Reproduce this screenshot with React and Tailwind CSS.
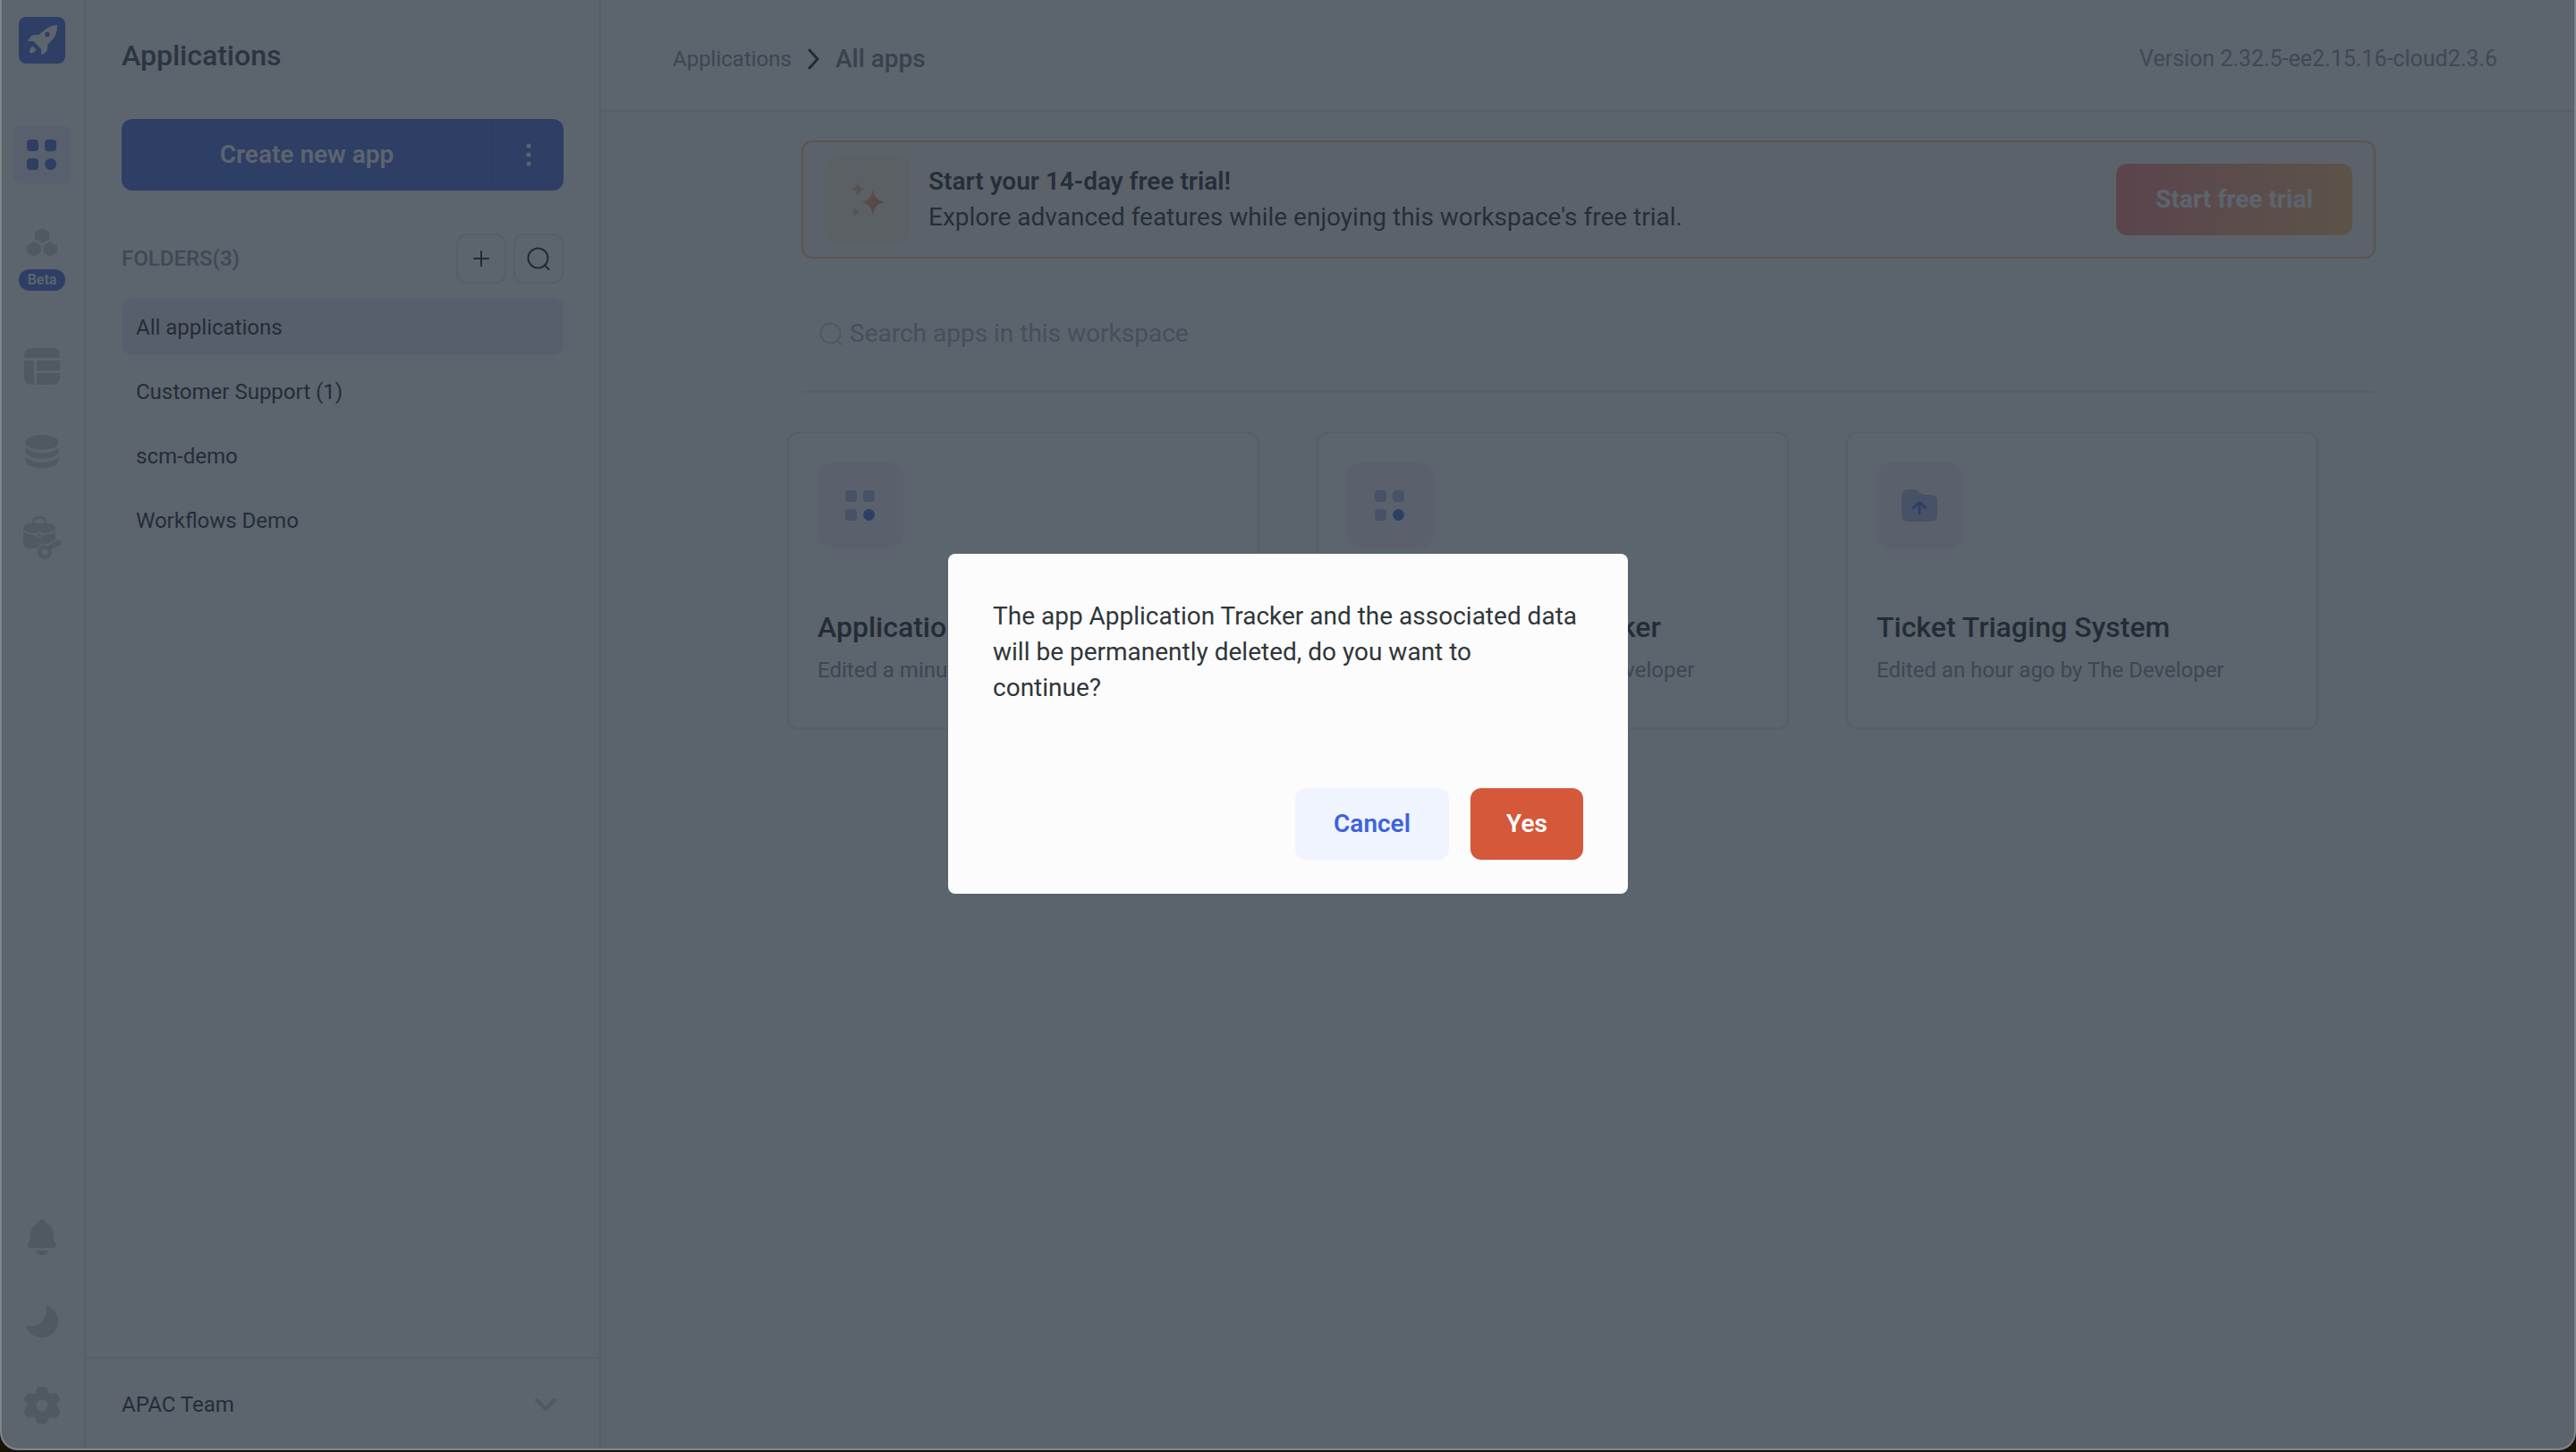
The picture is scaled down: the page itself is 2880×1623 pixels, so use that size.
import React from "react";

function RocketLogo() {
  return (
    <svg viewBox="0 0 52 52" className="size-13" aria-hidden="true">
      <rect width="52" height="52" rx="8" fill="#3e63dd" />
      <path
        fill="#fcfcfc"
        fillRule="evenodd"
        d="M43 9C37 9.2 33 11 29.500 14L22 20H17.500C14 20.200 12.500 22.500 10 27H16.500L25 36V42C28.500 41.500 31.500 39 32 36L32.500 30.500L37.500 25.500C41.500 21 43 16 43 9ZM32 22.200A2.700 2.700 0 1 1 32 16.800A2.700 2.700 0 1 1 32 22.200Z"
      />
      <path fill="#fcfcfc" d="M15.500 32.500L19.500 36.500C18.500 39 16 40.500 12 40.500C12 37 13 34 15.500 32.500Z" />
    </svg>
  );
}

function DotsIcon({ tinted }) {
  const soft = tinted ? "#acb5e2" : "#3e63dd";
  return (
    <svg viewBox="0 0 34 36" className="h-9 w-[34px]" aria-hidden="true">
      <rect x="0" y="1" width="13" height="13" rx="4" fill={soft} />
      <rect x="20" y="1" width="13" height="13" rx="4" fill={soft} />
      <rect x="0" y="22" width="13" height="13" rx="4" fill={soft} />
      <circle cx="26.500" cy="28.500" r="6.500" fill="#3e63dd" />
    </svg>
  );
}

function HexagonsIcon() {
  return (
    <svg viewBox="0 0 34 32" className="h-8 w-[34px]" fill="currentColor" aria-hidden="true">
      <path d="M17 0L25 4.500V12.500L17 16.500L9 12.500V4.500Z" />
      <path d="M8 15L15.500 19.500V27.500L8 31.500L0 27.500V19.500Z" />
      <path d="M26 15L34 19.500V27.500L26 31.500L18.500 27.500V19.500Z" />
    </svg>
  );
}

function TableIcon() {
  return (
    <svg viewBox="0 0 40 41" className="h-[41px] w-10" fill="currentColor" aria-hidden="true">
      <path d="M9 0H31Q40 0 40 9V11H0V9Q0 0 9 0Z" />
      <path d="M0 14H11V41H9Q0 41 0 32Z" />
      <path d="M14 14H40V25H14Z" />
      <path d="M14 28H40V32Q40 41 31 41H14Z" />
    </svg>
  );
}

function DatabaseIcon() {
  return (
    <svg viewBox="0 0 38 38" className="size-[38px]" fill="currentColor" aria-hidden="true">
      <ellipse cx="19" cy="8.500" rx="18.500" ry="8.500" />
      <path d="M.500 14Q7 20.500 19 20.500T37.500 14V18C37.500 29.500 .500 29.500 .500 18Z" />
      <path d="M.500 24.500Q7 31 19 31T37.500 24.500V28C37.500 40.500 .500 40.500 .500 28Z" />
    </svg>
  );
}

function BriefcaseKeyIcon() {
  return (
    <svg viewBox="0 0 43 48" className="h-12 w-[43px]" aria-hidden="true">
      <path d="M11.500 9V7.500Q11.500 1.500 17 1.500H19Q25 1.500 25 7.500V9" fill="none" stroke="currentColor" strokeWidth="3" />
      <path d="M8 8H28Q36 8 36 16V28Q36 36 28 36H8Q0 36 0 28V16Q0 8 8 8Z" fill="currentColor" />
      <path d="M0 16Q7 20.500 18 20.500T36 16" fill="none" stroke="#fcfcfc" strokeWidth="2" />
      <ellipse cx="18" cy="21" rx="2.500" ry="3.200" fill="currentColor" stroke="#fcfcfc" strokeWidth="1.500" />
      <g stroke="#fcfcfc" strokeWidth="3.500" fill="#fcfcfc">
        <circle cx="24" cy="40" r="8" />
        <path d="M26 34L37 27H42V32L32 40Z" />
      </g>
      <path d="M27 34L35.500 27.800Q37 26.800 42 27V31.500L38 34L36.500 33.500L30 39Z" fill="currentColor" />
      <circle cx="24" cy="40" r="5.800" fill="#fcfcfc" stroke="currentColor" strokeWidth="4.500" />
    </svg>
  );
}

function BellIcon() {
  return (
    <svg viewBox="0 0 34 40" className="h-10 w-[34px]" fill="currentColor" aria-hidden="true">
      <path d="M17 0C19.500 0 21.200 1.700 21.400 4.300C27 6.500 29.500 11 29.800 17C30 22 30.500 24 32.300 27C33.800 30 32.300 32 29.500 32H4.500C1.700 32 .200 30 1.700 27C3.500 24 4 22 4.200 17C4.500 11 7 6.500 12.600 4.300C12.800 1.700 14.500 0 17 0Z" />
      <path d="M10.500 35H23.500C22.500 38.500 20 40 17 40S11.500 38.500 10.500 35Z" />
    </svg>
  );
}

function MoonIcon() {
  return (
    <svg viewBox="0 0 36 36" className="size-9" fill="currentColor" aria-hidden="true">
      <path d="M23.500 0.500C31 3 36 10 36 18C36 28 28 36 18 36C10 36 3 31 .500 24.500C0 23 1 22.500 2.500 23C14 25.500 24 16 23 3C22.800 1 22.500 .200 23.500 .500Z" />
    </svg>
  );
}

function GearIcon() {
  return (
    <svg viewBox="0 0 40 42" className="h-[42px] w-10" fill="currentColor" aria-hidden="true">
      <path
        fillRule="evenodd"
        d="M16.500 0.500H23.500C25.500 .500 26.300 2.500 27 6C28 8 29.500 8.500 33 7.300C35.500 6.700 37 7.800 38.500 10.500C40.500 14 40.500 15.500 38 17.500C36 19.500 36 22.500 38 24.500C40.500 26.500 40.500 28 38.500 31.500C37 34.200 35.500 35.300 33 34.700C29.500 33.500 28 34 27 36C26.300 39.500 25.500 41.500 23.500 41.500H16.500C14.500 41.500 13.700 39.500 13 36C12 34 10.500 33.500 7 34.700C4.500 35.300 3 34.200 1.500 31.500C-.500 28 -.500 26.500 2 24.500C4 22.500 4 19.500 2 17.500C-.500 15.500 -.500 14 1.500 10.500C3 7.800 4.500 6.700 7 7.300C10.500 8.500 12 8 13 6C13.700 2.500 14.500 .500 16.500 .500ZM20 14.500A6.500 6.500 0 1 0 20 27.500A6.500 6.500 0 1 0 20 14.500Z"
      />
    </svg>
  );
}

function SearchIcon() {
  return (
    <svg viewBox="0 0 26 26" className="size-[26px]" fill="none" stroke="currentColor" strokeWidth="2" strokeLinecap="round" aria-hidden="true">
      <circle cx="12.500" cy="12.500" r="11" />
      <path d="M20 20.500L24.500 25" />
    </svg>
  );
}

function SparklesIcon() {
  return (
    <svg viewBox="0 0 38 40" className="h-10 w-[38px]" aria-hidden="true">
      <defs>
        <linearGradient id="spark-large" x1="0" x2="1">
          <stop offset="0" stopColor="#f5b070" />
          <stop offset="1" stopColor="#ec6a66" />
        </linearGradient>
        <linearGradient id="spark-small" x1="0" x2="1">
          <stop offset="0" stopColor="#f7bf92" />
          <stop offset="1" stopColor="#f09a88" />
        </linearGradient>
      </defs>
      <path fill="url(#spark-large)" d="M25 8C26.500 17.500 29.500 21.500 38 23C29.500 24.500 26.500 28.500 25 38C23.500 28.500 20 24.500 11.500 23C20 21.500 23.500 17.500 25 8Z" />
      <path fill="url(#spark-small)" d="M8 0C9 5.500 11 7.500 16 8.500C11 9.500 9 11.500 8 17C7 11.500 5 9.500 0 8.500C5 7.500 7 5.500 8 0Z" />
      <path fill="url(#spark-small)" d="M5 28C5.700 31.500 7 33.300 10.500 34C7 34.700 5.700 36.500 5 40C4.300 36.500 3 34.700 0 34C3 33.300 4.300 31.500 5 28Z" />
    </svg>
  );
}

function FolderUploadIcon() {
  return (
    <svg viewBox="0 0 40 36" className="h-9 w-10" aria-hidden="true">
      <path fill="#acb5e2" d="M8 0H14C20 0 20 6 26 6H32Q40 6 40 14V28Q40 36 32 36H8Q0 36 0 28V8Q0 0 8 0Z" />
      <path d="M20 26.500V15M13.500 20.500L18.500 15.500Q20 14 21.500 15.500L26.500 20.500" fill="none" stroke="#3e63dd" strokeWidth="3" strokeLinecap="round" />
    </svg>
  );
}

const railButton = "flex size-16 items-center justify-center rounded-lg";

function Rail() {
  return (
    <nav aria-label="Main" className="flex w-[94px] shrink-0 flex-col items-center border-r-2 border-[#e6e8eb] bg-[#fcfcfc] pt-[19px] pr-0.5 pb-4 text-[#cbccce]">
      <a href="#home" aria-label="Home">
        <RocketLogo />
      </a>
      <div className="mt-[70px] flex flex-col items-center gap-8">
        <button type="button" aria-label="Apps" className="flex size-16 items-center justify-center rounded-lg bg-[#ecedfc]">
          <DotsIcon />
        </button>
        <button type="button" aria-label="Workflows" className="flex h-[108px] w-16 flex-col items-center gap-[14px] pt-[18px]">
          <HexagonsIcon />
          <span className="flex h-6 w-13 items-center justify-center rounded-full bg-[#3e63dd] text-base font-semibold text-[#fcfcfc]">Beta</span>
        </button>
        <button type="button" aria-label="Database" className={railButton}>
          <TableIcon />
        </button>
        <button type="button" aria-label="Data sources" className={railButton}>
          <DatabaseIcon />
        </button>
        <button type="button" aria-label="Workspace constants" className={railButton}>
          <BriefcaseKeyIcon />
        </button>
      </div>
      <div className="mt-auto flex flex-col items-center gap-[30px]">
        <button type="button" aria-label="Notifications" className={railButton}>
          <BellIcon />
        </button>
        <button type="button" aria-label="Dark mode" className={railButton}>
          <MoonIcon />
        </button>
        <button type="button" aria-label="Settings" className={railButton}>
          <GearIcon />
        </button>
      </div>
    </nav>
  );
}

const folders = ["All applications", "Customer Support (1)", "scm-demo", "Workflows Demo"];

function Sidebar() {
  return (
    <aside className="flex w-[576px] shrink-0 flex-col border-r-2 border-[#e6e8eb] bg-[#fcfcfc] text-[#11181c]">
      <div className="flex-1 px-10 pt-[42px]">
        <h1 className="text-[32px] leading-10 font-medium text-[#303f48]">Applications</h1>
        <div className="mt-[51px] flex h-20 overflow-hidden rounded-xl bg-[#3e63dd] text-[#fcfcfc]">
          <button type="button" className="flex-1 text-center text-[28px] font-semibold">
            Create new app
          </button>
          <button type="button" aria-label="More ways to create" className="flex w-20 items-center justify-center border-l-2 border-[#3a5ccc]">
            <svg viewBox="0 0 6 26" className="h-[26px] w-1.5" fill="currentColor" aria-hidden="true">
              <circle cx="3" cy="3" r="2.500" />
              <circle cx="3" cy="13" r="2.500" />
              <circle cx="3" cy="23" r="2.500" />
            </svg>
          </button>
        </div>
        <div className="mt-12 flex h-14 items-center gap-2">
          <h2 className="flex-1 text-2xl font-medium text-[#889096]">FOLDERS(3)</h2>
          <button type="button" aria-label="Add folder" className="flex size-14 items-center justify-center rounded-xl border-2 border-[#e6e8eb]">
            <svg viewBox="0 0 18 18" className="size-[18px]" fill="none" stroke="currentColor" strokeWidth="2" strokeLinecap="round" aria-hidden="true">
              <path d="M9 1V17M1 9H17" />
            </svg>
          </button>
          <button type="button" aria-label="Search folders" className="flex size-14 items-center justify-center rounded-xl border-2 border-[#e6e8eb]">
            <SearchIcon />
          </button>
        </div>
        <ul className="mt-4 flex flex-col gap-2 text-2xl">
          {folders.map((name, i) => (
            <li key={name}>
              <a
                href="#folder"
                className={i === 0 ? "flex h-16 items-center rounded-xl bg-[#ecebfb] px-4 pt-0.5" : "flex h-16 items-center rounded-xl px-4 pt-0.5"}
              >
                {name}
              </a>
            </li>
          ))}
        </ul>
      </div>
      <button type="button" className="flex h-[102px] items-center justify-between border-t-2 border-[#e6e8eb] px-10 pt-0.5 text-2xl">
        APAC Team
        <svg viewBox="0 0 24 14" className="mr-2 h-3.5 w-6" fill="none" stroke="#cbccce" strokeWidth="4" strokeLinecap="round" strokeLinejoin="round" aria-hidden="true">
          <path d="M2 2L12 12L22 2" />
        </svg>
      </button>
    </aside>
  );
}

const apps = [
  { title: "Application Tracker", edited: "Edited a minute ago by The Developer", icon: "dots" },
  { title: "Customer Ticket Tracker", edited: "Edited an hour ago by The Developer", icon: "dots" },
  { title: "Ticket Triaging System", edited: "Edited an hour ago by The Developer", icon: "folder" },
];

function AppCard({ app }) {
  return (
    <article className="rounded-xl border-2 border-[#e6e8eb] bg-[#fcfcfc] px-8 pt-8 pb-12">
      <div className="flex size-24 items-center justify-center rounded-2xl bg-[#f6f2fe]">
        {app.icon === "dots" ? <DotsIcon tinted /> : <FolderUploadIcon />}
      </div>
      <h3 className="mt-[68px] truncate text-[32px] leading-10 font-medium text-[#11181c]">{app.title}</h3>
      <p className="mt-3 truncate text-2xl leading-8 text-[#7c858b]">{app.edited}</p>
    </article>
  );
}

function Main() {
  return (
    <div className="flex min-w-0 flex-1 flex-col bg-[#f9fafb]">
      <header className="flex h-[125px] items-center justify-between border-b-2 border-[#e6e8eb] bg-[#fcfcfc] pt-2 pr-[86px] pl-20">
        <nav aria-label="Breadcrumb" className="flex items-center gap-[18px]">
          <a href="#applications" className="text-2xl text-[#7c858b]">Applications</a>
          <svg viewBox="0 0 13 24" className="h-6 w-[13px]" fill="none" stroke="#11181c" strokeWidth="3" strokeLinecap="round" strokeLinejoin="round" aria-hidden="true">
            <path d="M2 2L11 12L2 22" />
          </svg>
          <span className="text-[28px] font-medium text-[#687076]">All apps</span>
        </nav>
        <span className="text-[25px] text-[#889096]">Version 2.32.5-ee2.15.16-cloud2.3.6</span>
      </header>
      <main className="mx-auto w-full max-w-[1762px] pt-8 pl-0.5">
        <section className="flex h-[132px] items-center rounded-xl border-2 border-[#ffc07a] bg-[#fff6ec] px-6">
          <div className="flex size-24 items-center justify-center rounded-xl bg-[#faefd8]">
            <SparklesIcon />
          </div>
          <div className="ml-5 flex-1 text-[28px] leading-10 text-[#1b1f2c]">
            <p className="font-semibold">Start your 14-day free trial!</p>
            <p>Explore advanced features while enjoying this workspace's free trial.</p>
          </div>
          <button type="button" className="h-20 w-[264px] rounded-xl bg-linear-to-r from-[#f57a79] to-[#fdb869] text-[28px] font-bold text-[#fcfcfc]">
            Start free trial
          </button>
        </section>
        <div className="mt-14 border-b-2 border-[#e6e8eb] pb-9">
          <label className="flex h-14 items-center gap-2 pl-5 text-[#c8cdd2]">
            <SearchIcon />
            <input
              type="text"
              aria-label="Search apps"
              placeholder="Search apps in this workspace"
              className="flex-1 bg-transparent text-[28px] text-[#11181c] outline-none placeholder:text-[#a4a9b3]"
            />
          </label>
        </div>
        <div className="mt-11 mr-16 -ml-4 grid grid-cols-3 gap-16">
          {apps.map((app) => (
            <AppCard key={app.title} app={app} />
          ))}
        </div>
      </main>
    </div>
  );
}

function DeleteDialog() {
  return (
    <div className="absolute inset-0 flex items-center justify-center bg-[#29333f]/76 pb-0.5">
      <div role="dialog" aria-modal="true" aria-labelledby="delete-message" className="w-[760px] rounded-lg bg-[#fcfcfc] px-[50px] pt-[50px] pb-[38px]">
        <p id="delete-message" className="text-[28px] leading-10 text-[#30363a]">
          The app Application Tracker and the associated data will be permanently deleted, do you want to continue?
        </p>
        <div className="mt-[92px] flex justify-end gap-6">
          <button type="button" className="h-20 w-[172px] rounded-xl bg-[#f0f4ff] text-[28px] font-semibold text-[#3e63dd]">Cancel</button>
          <button type="button" className="h-20 w-[126px] rounded-xl bg-[#d45839] text-[28px] font-semibold text-white">Yes</button>
        </div>
      </div>
    </div>
  );
}

export default function App() {
  return (
    <div className="flex min-h-screen flex-col bg-[#1a1206] pb-0.5 font-[Roboto,sans-serif]">
      <div className="relative flex flex-1 overflow-hidden rounded-b-[20px] border-x-2 border-b-2 border-[#7f858b]">
        <Rail />
        <Sidebar />
        <Main />
        <DeleteDialog />
      </div>
    </div>
  );
}
